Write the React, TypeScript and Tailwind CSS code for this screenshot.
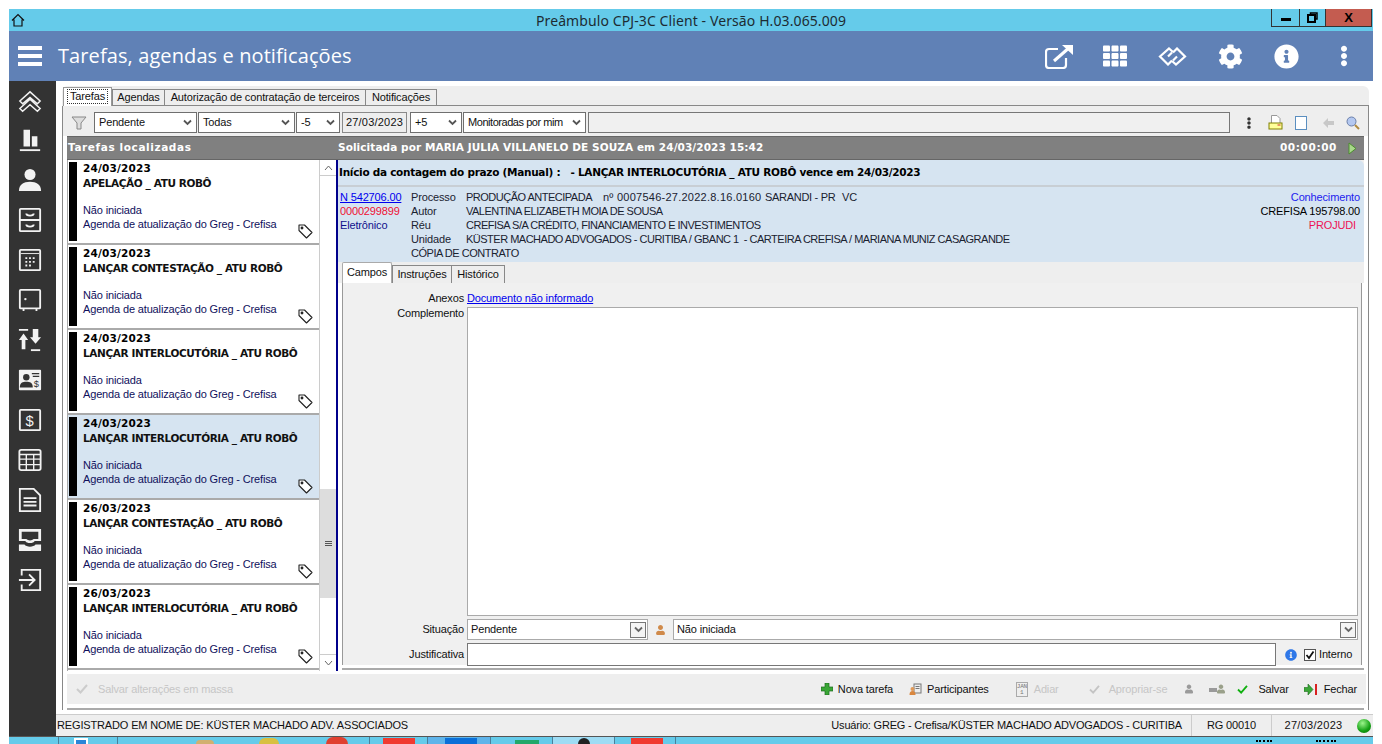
import type { ReactNode } from "react"
import { FaCog, FaEllipsisV, FaInfoCircle, FaTh, FaUser } from "react-icons/fa"

const tasks = [
  { date: "24/03/2023", title: "APELAÇÃO _ ATU ROBÔ" },
  { date: "24/03/2023", title: "LANÇAR CONTESTAÇÃO _ ATU ROBÔ" },
  { date: "24/03/2023", title: "LANÇAR INTERLOCUTÓRIA _ ATU ROBÔ" },
  { date: "24/03/2023", title: "LANÇAR INTERLOCUTÓRIA _ ATU ROBÔ", selected: true },
  { date: "26/03/2023", title: "LANÇAR CONTESTAÇÃO _ ATU ROBÔ" },
  { date: "26/03/2023", title: "LANÇAR INTERLOCUTÓRIA _ ATU ROBÔ" },
]

function Ico({ children }: { children: ReactNode }) {
  return (
    <svg width={24} height={24} viewBox="0 0 26 26" fill="none" stroke="#f2f2f2" strokeWidth="2">
      {children}
    </svg>
  )
}

const sideIcons = [
  <div key="up" className="-mb-[2px]">
    <Ico>
      <path d="M2 12 13 2l11 10-3 3-8-7-8 7zM2 20l11-10 11 10-3 3-8-7-8 7z" strokeWidth="1.6" />
    </Ico>
  </div>,
  <Ico key="chart">
    <path d="M6 2h7v18H6zM15 9h6v11h-6z" fill="#f2f2f2" stroke="none" />
    <path d="M2 24h22" />
  </Ico>,
  <Ico key="user">
    <circle cx="13" cy="7" r="6" fill="#f2f2f2" stroke="none" />
    <path d="M1 25c0-7 5-10 12-10s12 3 12 10z" fill="#f2f2f2" stroke="none" />
  </Ico>,
  <Ico key="drawer">
    <rect x="2" y="1" width="22" height="24" rx="1" />
    <path d="M2 13h22M9 6c0 3 8 3 8 0M9 18c0 3 8 3 8 0" />
  </Ico>,
  <Ico key="cal">
    <rect x="2" y="2" width="22" height="22" rx="1" />
    <path d="M3 6h20" strokeWidth="1" />
    <path d="M8 11h2M12 11h2M16 11h2M8 15h2M12 15h2M16 15h2M8 19h2M12 19h2" strokeWidth="2" />
  </Ico>,
  <Ico key="safe">
    <rect x="2" y="2" width="22" height="20" rx="1" />
    <path d="M6 22v3M20 22v3" />
    <circle cx="8" cy="12" r="1.3" fill="#f2f2f2" stroke="none" />
  </Ico>,
  <Ico key="sort">
    <path d="M1 2h10M19 1v10" />
    <path d="M6 6 1 13h3v10h4V13h3zM19 17l-6-7h3V1h6v9h3z" fill="#f2f2f2" stroke="none" />
    <path d="M14 24h10" />
  </Ico>,
  <Ico key="card">
    <rect x="1" y="2" width="24" height="22" rx="1" fill="#f2f2f2" stroke="none" />
    <circle cx="9" cy="10" r="3.5" fill="#333333" stroke="none" />
    <path d="M2 21c0-5 3-6 7-6s7 1 7 6z" fill="#333333" stroke="none" />
    <path d="M15 6h8M16 9h7" stroke="#333333" strokeWidth="1.3" />
    <text x="17" y="21" fontSize="10" fill="#333333" stroke="none" fontFamily="Liberation Sans">$</text>
  </Ico>,
  <Ico key="money">
    <rect x="2" y="2" width="22" height="22" rx="1" />
    <text x="8" y="19" fontSize="16" fill="#f2f2f2" stroke="none" fontFamily="Liberation Sans">$</text>
  </Ico>,
  <Ico key="calc">
    <rect x="1.500" y="2" width="23" height="22" rx="2" />
    <path d="M2 7h22M2 12h22M2 18h22M9 7v17M17 7v17" strokeWidth="1.5" />
  </Ico>,
  <Ico key="doc">
    <path d="M2 1h15l7 7v17H2z" />
    <path d="M6 11h14M6 15h14M6 19h14" />
  </Ico>,
  <Ico key="tray">
    <path d="M1 1h24v13H18c-1 3-9 3-10 0H1z" fill="#f2f2f2" stroke="none" />
    <path d="M4 4h18v8h-5c-2 2-6 2-8 0H4z" fill="#333333" stroke="none" />
    <path d="M1 18h6c2 3 10 3 12 0h6v6a1 1 0 0 1-1 1H2a1 1 0 0 1-1-1z" fill="#f2f2f2" stroke="none" />
  </Ico>,
  <Ico key="exit">
    <path d="M4 8V2h20v22H4v-6" />
    <path d="M1 13h16M12 7l6 6-6 6" />
  </Ico>,
]

function Select({ label, className = "" }: { label: string; className?: string }) {
  return (
    <div className={`h-[21px] bg-white border border-[#6f6f6f] flex items-center pl-1 pr-1 justify-between ${className}`}>
      <span className="whitespace-nowrap">{label}</span>
      <svg width="9" height="7" viewBox="0 0 9 7" fill="none" stroke="#555555" strokeWidth="1.800">
        <path d="M1 1.500 4.500 5 8 1.500" />
      </svg>
    </div>
  )
}

function TagIcon() {
  return (
    <svg width="15" height="15" viewBox="0 0 15 15" fill="white" stroke="#222222" strokeWidth="1.100">
      <path d="M1 1h5.500l7.500 7.500-5.500 5.500L1 6.500z" strokeLinejoin="round" />
      <circle cx="4" cy="4" r="0.900" fill="#222222" />
    </svg>
  )
}

function TaskCard({ date, title, selected }: { date: string; title: string; selected?: boolean }) {
  return (
    <div className={`h-[85px] shrink-0 border-b-2 border-[#aaaaaa] flex py-[2px] pl-px relative ${selected ? "bg-[#d6e4f1]" : "bg-white"}`}>
      <div className="w-2 bg-black shrink-0" />
      <div className="ml-[6px] flex flex-col">
        <div className="font-['DejaVu_Sans'] font-bold text-[10.500px] leading-[15px] text-black -mt-[1px] tracking-[0.2px]">{date}</div>
        <div className="font-['DejaVu_Sans'] font-bold text-[10.500px] leading-[15px] text-[#111] whitespace-nowrap tracking-[-0.4px]">{title}</div>
        <div className="text-[#10105c] mt-[12px] leading-[14px]">Não iniciada</div>
        <div className="text-[#10105c] leading-[14px] whitespace-nowrap">Agenda de atualização do Greg - Crefisa</div>
      </div>
      <div className="absolute right-[6px] bottom-[4px]">
        <TagIcon />
      </div>
    </div>
  )
}

function ListScrollbar() {
  return (
    <div className="w-[17px] shrink-0 bg-white border-l border-[#cccccc] flex flex-col text-[#666666]">
      <div className="h-[16px] border-b border-[#cccccc] flex items-center justify-center">
        <svg width="9" height="6" viewBox="0 0 9 6" fill="none" stroke="#666666"><path d="M1 5 4.500 1 8 5" /></svg>
      </div>
      <div className="flex-1 flex flex-col justify-end pb-[56px]">
        <div className="h-[109px] bg-[#dddddd] flex flex-col items-center justify-center gap-[1px]">
          <div className="w-[7px] h-px bg-[#555555]" />
          <div className="w-[7px] h-px bg-[#555555]" />
          <div className="w-[7px] h-px bg-[#555555]" />
        </div>
      </div>
      <div className="h-[17px] border-t border-[#cccccc] flex items-center justify-center">
        <svg width="9" height="6" viewBox="0 0 9 6" fill="none" stroke="#666666"><path d="M1 1 4.500 5 8 1" /></svg>
      </div>
    </div>
  )
}

function ProcessInfo() {
  const rows = [
    ["Autor", "VALENTINA ELIZABETH MOIA DE SOUSA"],
    ["Réu", "CREFISA S/A CRÉDITO, FINANCIAMENTO E INVESTIMENTOS"],
    ["Unidade", "KÜSTER MACHADO ADVOGADOS - CURITIBA / GBANC 1  - CARTEIRA CREFISA / MARIANA MUNIZ CASAGRANDE"],
  ]
  return (
    <div className="h-[77px] bg-[#d6e4f1] border-t-2 border-[#c8ced4] flex pl-[2px] pr-[4px] pt-[3px] leading-[14px] shrink-0">
      <div className="w-[71px] shrink-0">
        <div className="text-[#0000ee] underline">N 542706.00</div>
        <div className="text-[#ee1133]">0000299899</div>
        <div className="text-[#10108c]">Eletrônico</div>
      </div>
      <div className="flex-1">
        <div className="flex text-[#1a2230] whitespace-nowrap">
          <div className="w-[55px] shrink-0">Processo</div>
          <div className="w-[137px] tracking-[-0.5px]">PRODUÇÃO ANTECIPADA</div>
          <div className="w-[162px] tracking-[0.25px]">nº 0007546-27.2022.8.16.0160</div>
          <div className="w-[77px] tracking-[-0.3px]">SARANDI - PR</div>
          <div>VC</div>
        </div>
        {rows.map(([k, v]) => (
          <div key={k} className="flex text-[#1a2230]">
            <div className="w-[55px] shrink-0">{k}</div>
            <div className="whitespace-pre tracking-[-0.5px]">{v}</div>
          </div>
        ))}
        <div className="text-[#1a2230] tracking-[-0.47px]">CÓPIA DE CONTRATO</div>
      </div>
      <div className="text-right">
        <div className="text-[#2222ee]">Conhecimento</div>
        <div className="text-black">CREFISA 195798.00</div>
        <div className="text-[#ee1155] pr-[4px]">PROJUDI</div>
      </div>
    </div>
  )
}

function DropBox() {
  return (
    <div className="w-[16px] h-[16px] border border-[#777777] bg-[#f4f4f4] flex items-center justify-center">
      <svg width="9" height="7" viewBox="0 0 9 7" fill="none" stroke="#666666" strokeWidth="1.800"><path d="M1 1.500 4.500 5 8 1.500" /></svg>
    </div>
  )
}

function FormPanel() {
  return (
    <div className="flex-1 flex flex-col pl-[4px] pr-px min-h-0 bg-white">
      <div className="flex h-[21px] items-end relative z-10 bg-[#eeeeee] -ml-[4px] -mr-px pl-[4px]">
        <div className="h-[21px] w-[50px] bg-white border-t border-x border-[#aaaaaa] rounded-t-[2px] flex items-center justify-center pb-[2px]">Campos</div>
        <div className="h-[18px] w-[60px] bg-[#eeeeee] border border-[#888888] border-b-0 flex items-center justify-center">Instruções</div>
        <div className="h-[18px] w-[53px] bg-[#eeeeee] border border-[#888888] border-b-0 border-l-0 flex items-center justify-center">Histórico</div>
      </div>
      <div className="flex-1 border border-[#999999] border-b-0 bg-[#f0f0f0] mr-[1px] -mt-px pt-[8px] pr-[3px] flex flex-col min-h-0 mb-[3px]">
        <div className="flex h-[15px] items-center">
          <div className="w-[124px] text-right pr-[3px] shrink-0">Anexos</div>
          <span className="text-[#0000ee] underline">Documento não informado</span>
        </div>
        <div className="flex mt-[1px]">
          <div className="w-[124px] text-right pr-[3px] shrink-0 leading-[13px]">Complemento</div>
          <div className="flex-1 h-[309px] bg-white border border-[#aaaaaa]" />
        </div>
        <div className="flex mt-[3px] h-[22px] items-center">
          <div className="w-[124px] text-right pr-[3px] shrink-0">Situação</div>
          <div className="w-[181px] h-[21px] bg-white border border-[#aaaaaa] flex items-center justify-between pl-[3px] pr-[1px]">
            Pendente
            <DropBox />
          </div>
          <div className="w-[25px] flex justify-center">
            <FaUser className="text-[#d08a4a] w-[9px] h-[10px]" />
          </div>
          <div className="flex-1 h-[21px] bg-white border border-[#aaaaaa] flex items-center justify-between pl-[3px] pr-[1px]">
            Não iniciada
            <DropBox />
          </div>
        </div>
        <div className="flex mt-[3px] h-[24px] items-center">
          <div className="w-[124px] text-right pr-[3px] shrink-0">Justificativa</div>
          <div className="w-[809px] h-[23px] bg-white border border-[#777777]" />
          <FaInfoCircle className="ml-[9px] text-[#2f78e8] w-[12px] h-[12px]" />
          <div className="ml-[7px] w-[12px] h-[12px] border border-[#555555] bg-white flex items-center justify-center">
            <svg width="10" height="10" viewBox="0 0 10 10" fill="none" stroke="#111111" strokeWidth="1.800"><path d="M1.500 5 4 8 8.500 1.500" /></svg>
          </div>
          <span className="ml-[3px]">Interno</span>
        </div>
      </div>
      <div className="h-[2px] bg-[#aaaaaa] -mr-px mb-px" />
    </div>
  )
}

function Actions() {
  return (
    <div className="h-[30px] mt-[3px] ml-[4px] mr-[2px] bg-[#eeeeee] flex items-center shrink-0">
      <svg className="ml-[9px]" width="12" height="10" viewBox="0 0 12 10" fill="none" stroke="#cccccc" strokeWidth="2"><path d="M1 5 4.500 8.500 11 1" /></svg>
      <span className="ml-[10px] text-[#c6c6c6]">Salvar alterações em massa</span>
      <div className="flex-1" />
      <svg width="12" height="12" viewBox="0 0 12 12"><path d="M4 0h4v4h4v4H8v4H4V8H0V4h4z" fill="#3aa636" stroke="#1e6b1e" strokeWidth="0.700" /></svg>
      <span className="ml-[5px]">Nova tarefa</span>
      <svg className="ml-[16px]" width="13" height="13" viewBox="0 0 13 13" fill="none"><rect x="5" y="1" width="7" height="9" stroke="#777777" /><path d="M6.500 3.500h4M6.500 5.500h4" stroke="#777777" /><circle cx="3.500" cy="6" r="2" fill="#e09a5a" /><path d="M0.500 12c0-3 1-4 3-4s3 1 3 4z" fill="#d9873f" /></svg>
      <span className="ml-[5px]">Participantes</span>
      <div className="ml-[27px] w-[12px] h-[15px] border border-[#aaaaaa] text-[6px] leading-[6px] text-[#777777] text-center font-['Liberation_Mono'] pt-px">JAN<br />1</div>
      <span className="ml-[6px] text-[#c6c6c6]">Adiar</span>
      <svg className="ml-[30px]" width="11" height="9" viewBox="0 0 12 10" fill="none" stroke="#c4c4c4" strokeWidth="2"><path d="M1 5 4.500 8.500 11 1" /></svg>
      <span className="ml-[9px] text-[#c6c6c6]">Apropriar-se</span>
      <FaUser className="ml-[18px] text-[#9a9a9a] w-[8px] h-[10px]" />
      <div className="ml-[16px] w-[8px] h-[4px] bg-[#9a9a9a] mt-[2px]" />
      <FaUser className="text-[#9aa08a] w-[8px] h-[10px]" />
      <svg className="ml-[12px]" width="11" height="9" viewBox="0 0 12 10" fill="none" stroke="#10b010" strokeWidth="2"><path d="M1 5 4.500 8.500 11 1" /></svg>
      <span className="ml-[10px]">Salvar</span>
      <svg className="ml-[15px]" width="14" height="11" viewBox="0 0 14 11"><path d="M0 3.500h4V0l5 5.500L4 11V7.500H0z" fill="#3aa636" stroke="#1e6b1e" strokeWidth="0.600" /><path d="M11 0h2v11h-2z" fill="#d82020" /></svg>
      <span className="ml-[6px] mr-[9px]">Fechar</span>
    </div>
  )
}

function Toolbar() {
  return (
    <div className="h-[30px] flex items-center gap-[1px] pt-[3px] pl-[3px] pr-[2px] bg-[#eeeeee] shrink-0">
      <svg width="18" height="14" viewBox="0 0 18 14" className="ml-[5px] mr-[4px]">
        <path d="M1 1h14L10 7v6H6V7z" fill="#dddddd" stroke="#888888" />
      </svg>
      <Select label="Pendente" className="w-[103px]" />
      <Select label="Todas" className="w-[97px]" />
      <Select label="-5" className="w-[44px]" />
      <div className="ml-[1px] w-[65px] h-[21px] border border-[#8a8a8a] bg-[#eeeeee] flex items-center justify-center tracking-[0.2px]">27/03/2023</div>
      <Select label="+5" className="ml-[2px] w-[52px]" />
      <Select label="Monitoradas por mim" className="w-[123px] tracking-[-0.45px]" />
      <div className="ml-[1px] flex-1 h-[21px] border border-[#777777] bg-[#f0f0f0]" />
      <FaEllipsisV className="ml-[14px] text-[#333333] w-[8px] h-[12px]" />
      <svg className="ml-[14px]" width="15" height="15" viewBox="0 0 15 15"><path d="M3.500 0.500h5.500l3 3v5H3.500z" fill="#ffffff" stroke="#999999" /><rect x="1" y="8" width="13" height="6" fill="#ffff99" stroke="#808000" /><path d="M9.500 10h3" stroke="#d03030" /></svg>
      <div className="ml-[11px] w-[12px] h-[14px] bg-white border border-[#5b8fc0]" />
      <svg className="ml-[15px]" width="11" height="10" viewBox="0 0 11 10"><path d="M0 5 5 0v3h6v4H5v3z" fill="#c8c8c8" /></svg>
      <svg className="ml-[11px] mr-[6px]" width="14" height="14" viewBox="0 0 14 14"><circle cx="5.500" cy="5.500" r="4.500" fill="#b4c8f0" stroke="#6b7fa8" /><path d="M9 9l4 4" stroke="#b08a40" strokeWidth="2" /></svg>
    </div>
  )
}

function Taskbar() {
  const cells = [
    { w: 50, cls: "", icon: null },
    { w: 59, cls: "", icon: <div className="ml-[15px] mt-px w-[14px] h-[7px] bg-[#2a86d8] border-t-2 border-x-2 border-white" /> },
    { w: 252, cls: "", icon: <div className="flex"><div className="ml-[78px] mt-[3px] w-[18px] h-[4px] bg-[#d2b070] rounded-t-full" /><div className="ml-[45px] mt-[1px] w-[20px] h-[6px] bg-[#d8c040] rounded-t-md" /><div className="ml-[47px] w-[22px] h-[7px] bg-[#e04030] rounded-t-full" /></div> },
    { w: 58, cls: "", icon: <div className="ml-[13px] mt-px w-[32px] h-[7px] bg-[#f03a30]" /> },
    { w: 63, cls: "bg-[#5fb4ea]", icon: <div className="ml-[17px] mt-px w-[32px] h-[7px] bg-[#0a6fd8]" /> },
    { w: 62, cls: "", icon: <div className="ml-[24px] mt-[3px] w-[24px] h-[4px] bg-[#22a86a]" /> },
    { w: 62, cls: "bg-[#9edcf4]", icon: <div className="ml-[25px] mt-px w-[12px] h-[6px] bg-[#222222] rounded-t-full" /> },
    { w: 61, cls: "", icon: <div className="ml-[16px] mt-px w-[32px] h-[7px] bg-[#f03a30]" /> },
  ]
  return (
    <div className="h-[8px] bg-[#65cbea] border-t border-[#555555] flex shrink-0 overflow-hidden">
      {cells.map((c, i) => (
        <div key={i} style={{ width: c.w }} className={`shrink-0 border-r border-[#4a7f9a] ${c.cls}`}>
          {c.icon}
        </div>
      ))}
      <div className="flex-1 relative">
        <div className="absolute left-[580px] top-[3px] w-[16px] h-[3px] border-t-2 border-dotted border-black" />
        <div className="absolute left-[640px] top-[3px] w-[20px] h-[3px] border-t-2 border-dotted border-black" />
      </div>
    </div>
  )
}

export default function App() {
  return (
    <div className="w-[1382px] h-[744px] bg-white pt-[9px] pl-[9px] pr-[9px] flex flex-col overflow-hidden font-['Liberation_Sans',sans-serif] text-[11px] tracking-[-0.15px] text-[#111111]">
      <div className="h-[22px] bg-[#65cbea] flex items-center relative shrink-0">
        <svg className="ml-[2px]" width="14" height="14" viewBox="0 0 14 14" fill="none" stroke="#111111" strokeWidth="1.200"><path d="M1 7.500 7 1.500l6 6M3 6.500V13h8V6.500" /></svg>
        <div className="flex-1 text-center text-[14px] font-['Noto_Sans'] text-[#1d2b33] tracking-[0.1px] mr-[16px]">Preâmbulo CPJ-3C Client - Versão H.03.065.009</div>
        <div className="absolute right-[1px] top-0 flex h-[18px] border border-t-0 border-[#333333]">
          <div className="w-[28px] border-r border-[#333333] flex items-center justify-center"><div className="w-[10px] h-[3px] bg-black mt-[3px]" /></div>
          <div className="w-[26px] border-r border-[#333333] flex items-center justify-center">
            <svg width="11" height="11" viewBox="0 0 11 11" fill="none" stroke="#000000" strokeWidth="1.500"><path d="M3.500 2.500V1h6.500v6H8" /><rect x="1" y="3" width="7" height="7" strokeWidth="2" /></svg>
          </div>
          <div className="w-[45px] bg-[#c45c50] flex items-center justify-center font-bold text-[13px] leading-none text-black">X</div>
        </div>
      </div>
      <div className="h-[50px] bg-[#6081b6] flex items-center shrink-0 text-white">
        <div className="ml-[9px] w-[24px] flex flex-col gap-[4px]">
          <div className="h-[4px] bg-white" />
          <div className="h-[4px] bg-white" />
          <div className="h-[4px] bg-white" />
        </div>
        <div className="ml-[16px] text-[20px] font-['Open_Sans'] tracking-[0.1px]">Tarefas, agendas e notificações</div>
        <div className="flex-1" />
        <svg className="mr-[27px]" width="29" height="25" viewBox="0 0 29 25" fill="none" stroke="white" strokeWidth="2.200">
          <path d="M21 14v7a3 3 0 0 1-3 3H4a3 3 0 0 1-3-3V8a3 3 0 0 1 3-3h9" />
          <path d="M9 17 25 3" strokeWidth="3" />
          <path d="M17 1h11v10z" fill="white" stroke="none" />
        </svg>
        <FaTh className="w-[28px] h-[24px] mr-[29px]" />
        <svg className="mr-[31px]" width="29" height="19" viewBox="0 0 29 19" fill="none" stroke="white" strokeWidth="2.200">
          <path d="M15 5 11 1.500 2 9.500l8 8 4-4M14 14l4 3.500 9-8-8-8-4 4" />
          <path d="M10 9.500 14 5.500M15 13.500 19 9.500" />
        </svg>
        <FaCog className="w-[25px] h-[25px] mr-[31px]" />
        <FaInfoCircle className="w-[25px] h-[25px] mr-[41px]" />
        <FaEllipsisV className="w-[8px] h-[24px] mr-[25px]" />
      </div>
      <div className="flex-1 flex min-h-0">
        <div className="w-[47px] bg-[#333333] flex flex-col items-center pt-[9px] pr-[5px] gap-[16px] shrink-0">
          {sideIcons}
        </div>
        <div className="flex-1 flex flex-col min-w-0">
          <div className="flex-1 ml-[6px] mr-[4px] mt-[5px] min-h-0 flex flex-col bg-[#eeeeee] rounded-t-[6px]">
            <div className="flex h-[20px] pl-px items-end shrink-0 relative z-10 rounded-t-[6px]">
              <div className="h-[19px] w-[49px] bg-white border-t border-x border-[#999999] flex items-center justify-center pb-[1px]"><span className="border border-dotted border-[#333333] px-[2px] leading-[13px]">Tarefas</span></div>
              <div className="h-[17px] w-[53px] bg-[#eeeeee] border border-[#888888] flex items-center justify-center">Agendas</div>
              <div className="h-[17px] w-[201px] bg-[#eeeeee] border border-[#888888] border-l-0 flex items-center justify-center whitespace-nowrap">Autorização de contratação de terceiros</div>
              <div className="h-[17px] w-[71px] bg-[#eeeeee] border border-[#888888] border-l-0 flex items-center justify-center">Notificações</div>
              <div className="flex-1 h-[17px] border-b border-[#888888]" />
            </div>
            <div className="flex-1 border-x border-b-0 border-[#888888] bg-white flex flex-col min-h-0">
              <Toolbar />
              <div className="h-[24px] mx-[4px] bg-[#808080] border-y border-[#666666] flex items-center text-white font-['DejaVu_Sans'] font-bold text-[10.500px] tracking-normal shrink-0">
                <div className="w-[271px] pl-[1px] tracking-[0.6px]">Tarefas localizadas</div>
                <div className="tracking-[0.08px]">Solicitada por MARIA JULIA VILLANELO DE SOUZA em 24/03/2023 15:42</div>
                <div className="flex-1" />
                <span className="tracking-[0.6px]">00:00:00</span>
                <svg className="ml-[11px] mr-[7px]" width="9" height="13" viewBox="0 0 9 13"><path d="M1 1l7 5.500-7 5.500z" fill="#a8d88a" stroke="#4c8c30" /></svg>
              </div>
              <div className="flex mx-[4px] h-[511px] shrink-0 min-h-0">
                <div className="w-[252px] shrink-0 overflow-hidden border-l border-[#aaaaaa] flex flex-col">
                  {tasks.map((t, i) => (
                    <TaskCard key={i} date={t.date} title={t.title} selected={t.selected} />
                  ))}
                </div>
                <ListScrollbar />
                <div className="w-[2px] bg-[#00008b] shrink-0" />
                <div className="flex-1 flex flex-col min-w-0 bg-[#eeeeee]">
                  <div className="h-[25px] bg-[#d6e4f1] rounded-tr-[6px] flex items-center font-['DejaVu_Sans'] font-bold text-[10.500px] tracking-[-0.28px] text-black whitespace-pre pl-[1px] shrink-0">
                    Início da contagem do prazo (Manual) :   - LANÇAR INTERLOCUTÓRIA _ ATU ROBÔ vence em 24/03/2023
                  </div>
                  <ProcessInfo />
                  <FormPanel />
                </div>
              </div>
              <Actions />
              <div className="h-[2px] bg-[#aaaaaa] mx-[4px] mt-[4px] shrink-0" />
            </div>
          </div>
          <div className="h-[22px] mt-[4px] bg-[#eeeeee] border-t border-[#cccccc] flex items-center shrink-0">
            <div className="flex-1 pl-px whitespace-nowrap">REGISTRADO EM NOME DE: KÜSTER MACHADO ADV. ASSOCIADOS</div>
            <div className="pr-[9px] border-r border-[#cccccc] h-full flex items-center tracking-[-0.2px]">Usuário: GREG - Crefisa/KÜSTER MACHADO ADVOGADOS - CURITIBA</div>
            <div className="w-[80px] border-r border-[#cccccc] h-full flex items-center justify-center">RG 00010</div>
            <div className="w-[83px] h-full flex items-center justify-center tracking-[0.3px]">27/03/2023</div>
            <div className="w-[18px] h-full flex items-center justify-center">
              <div className="w-[14px] h-[14px] rounded-full bg-[radial-gradient(circle_at_40%_30%,#9cf58c,#12a012_60%,#0a6a0a)]" />
            </div>
          </div>
        </div>
      </div>
      <Taskbar />
    </div>
  )
}
